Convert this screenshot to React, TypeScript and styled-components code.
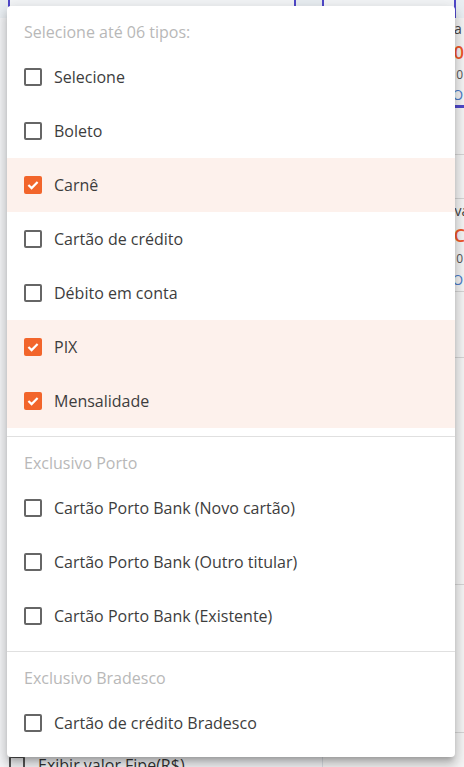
import React from "react"
import styled, { createGlobalStyle } from "styled-components"

const GlobalStyle = createGlobalStyle`
  html, body {
    margin: 0;
    padding: 0;
    background: #f3f4f6;
    font-family: "Open Sans", "Liberation Sans", sans-serif;
    overflow: hidden;
  }
`

const Page = styled.div`
  position: relative;
  width: 464px;
  height: 767px;
  overflow: hidden;
  background: #f3f4f6;
`

const TopBar = styled.div`
  display: flex;
  gap: 26px;
  height: 18px;
  padding: 0 0 0 8px;
  background: #e9eef2;
`

const FakeInput = styled.div<{ $w: number }>`
  width: ${(p) => p.$w}px;
  height: 100%;
  border-left: 2px solid #4f48c9;
  border-right: 2px solid #4f48c9;
  background: #f3f5f7;
`

const Body = styled.div`
  display: grid;
  grid-template-columns: 322px 1fr;
  height: 749px;
`

const LeftCol = styled.div`
  display: flex;
  flex-direction: column;
  justify-content: flex-end;
  padding: 0 0 0 9px;
`

const FipeRow = styled.label`
  display: flex;
  align-items: center;
  gap: 13px;
  height: 24px;
  margin-bottom: -10px;
  font-size: 16px;
  color: #333;
`

const SmallBox = styled.span`
  width: 12px;
  height: 14px;
  border: 2px solid #555;
  border-radius: 2px;
`

const RightCol = styled.div`
  display: flex;
  flex-direction: column;
  padding-left: 8px;
  border-left: 1px solid #d9dde2;
  background: #f4f4f4;
`

const Card = styled.div<{ $h: number; $accent?: boolean }>`
  display: flex;
  flex-direction: column;
  justify-content: space-around;
  height: ${(p) => p.$h}px;
  border-bottom: ${(p) => (p.$accent ? "3px solid #4f48c9" : "1px solid #d4d4d4")};
  font-size: 14px;
  color: #444;
  white-space: nowrap;
`

const Price = styled.span`
  color: #f0582a;
  font-size: 18px;
  font-weight: 600;
`

const Hint = styled.span`
  font-size: 12px;
  color: #555;
`

const Link = styled.span`
  color: #4a7bc8;
  font-size: 14px;
`

const Menu = styled.div`
  position: absolute;
  left: 7px;
  top: 6px;
  width: 448px;
  padding: 0 0 7px;
  background: #fff;
  border-radius: 4px;
  box-shadow: 0 5px 5px -3px rgba(0, 0, 0, 0.2), 0 8px 10px 1px rgba(0, 0, 0, 0.14),
    0 3px 14px 2px rgba(0, 0, 0, 0.12);
`

const Subheader = styled.div`
  padding: 8px 17px 0;
  height: 36px;
  line-height: 36px;
  font-size: 16px;
  color: #b8b8b8;
`

const Item = styled.div<{ $checked?: boolean }>`
  display: flex;
  align-items: center;
  gap: 12px;
  height: 54px;
  padding: 0 17px;
  background: ${(p) => (p.$checked ? "#fdf1ec" : "transparent")};
  font-size: 16px;
  color: #3d3d3d;
`

const Box = styled.span<{ $checked?: boolean }>`
  display: flex;
  align-items: center;
  justify-content: center;
  box-sizing: border-box;
  width: 18px;
  height: 18px;
  border-radius: 2px;
  border: ${(p) => (p.$checked ? "none" : "2px solid #666")};
  background: ${(p) => (p.$checked ? "#f2652b" : "transparent")};
`

const Divider = styled.hr`
  margin: 8px 0 0;
  border: none;
  border-top: 1px solid #e0e0e0;
`

const Check = ({ checked }: { checked?: boolean }) => (
  <Box $checked={checked}>
    {checked && (
      <svg width="14" height="14" viewBox="0 0 14 14">
        <path d="M2.4 7 L5.6 10.1 L11.6 4" fill="none" stroke="#fff" strokeWidth="2.2" />
      </svg>
    )}
  </Box>
)

const groups = [
  {
    title: "Selecione até 06 tipos:",
    items: [
      { label: "Selecione" },
      { label: "Boleto" },
      { label: "Carnê", checked: true },
      { label: "Cartão de crédito" },
      { label: "Débito em conta" },
      { label: "PIX", checked: true },
      { label: "Mensalidade", checked: true },
    ],
  },
  {
    title: "Exclusivo Porto",
    items: [
      { label: "Cartão Porto Bank (Novo cartão)" },
      { label: "Cartão Porto Bank (Outro titular)" },
      { label: "Cartão Porto Bank (Existente)" },
    ],
  },
  {
    title: "Exclusivo Bradesco",
    items: [{ label: "Cartão de crédito Bradesco" }],
  },
]

export default function App() {
  return (
    <Page>
      <GlobalStyle />
      <TopBar>
        <FakeInput $w={284} />
        <FakeInput $w={130} />
      </TopBar>
      <Body>
        <LeftCol>
          <FipeRow>
            <SmallBox />
            Exibir valor Fipe(R$)
          </FipeRow>
        </LeftCol>
        <RightCol>
          <Card $h={87} $accent>
            <span>Mensalidade mensa</span>
            <Price>Valor R$ 120,00</Price>
            <Hint>Data de vencimento: 10</Hint>
            <Link>Ver outras formas O</Link>
          </Card>
          <Card $h={46} />
          <Card $h={43}>
            <span>Pagamento mais s</span>
          </Card>
          <Card $h={92}>
            <span>Parcela mensal grava</span>
            <Price>Valor R$ 1.438C</Price>
            <Hint>Data de vencimento: 10</Hint>
            <Link>Ver outras formas O</Link>
          </Card>
          <Card $h={65} />
          <Card $h={226} />
          <Card $h={147} />
        </RightCol>
      </Body>
      <Menu>
        {groups.map((g, gi) => (
          <React.Fragment key={g.title}>
            {gi > 0 && <Divider />}
            <Subheader>{g.title}</Subheader>
            {g.items.map((it) => (
              <Item key={it.label} $checked={it.checked}>
                <Check checked={it.checked} />
                {it.label}
              </Item>
            ))}
          </React.Fragment>
        ))}
      </Menu>
    </Page>
  )
}
